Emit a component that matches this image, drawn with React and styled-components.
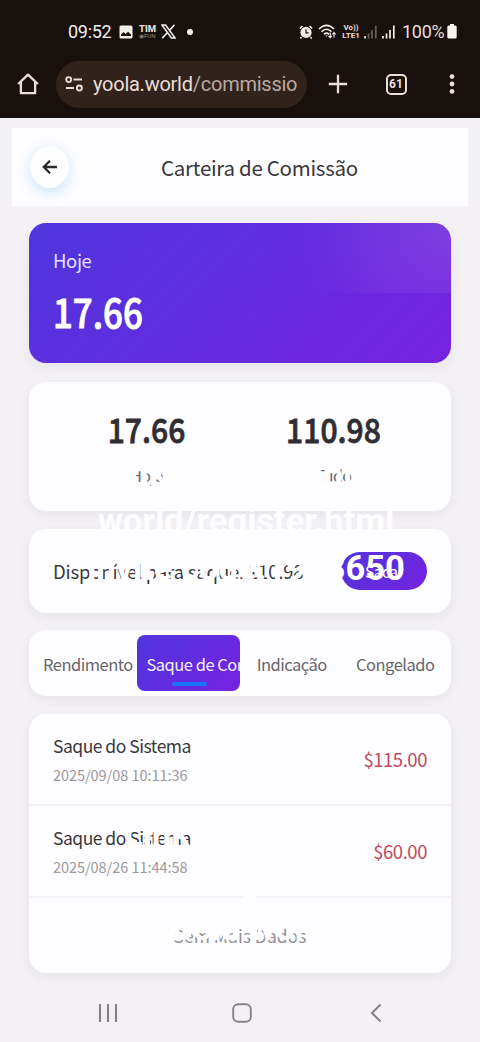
import React from "react";
import styled, { createGlobalStyle } from "styled-components";

const GlobalStyle = createGlobalStyle`
  * {
    box-sizing: border-box;
  }
  body {
    margin: 0;
    background: #f3f1f4;
  }
`;

const records = [
  { title: "Saque do Sistema", date: "2025/09/08 10:11:36", amount: "$115.00" },
  { title: "Saque do Sistema", date: "2025/08/26 11:44:58", amount: "$60.00" },
];

const StatusIcons = () => (
  <>
    <StatusIcon width="14" height="14" viewBox="0 0 14 14" $left={7}>
      <rect x="0.5" y="0.5" width="13" height="13" rx="1.5" fill="#f3eeea" />
      <path d="M2 11V9.5L4.5 7L6.5 9L9 6.8L12 9.5V11Z" fill="#18100c" />
    </StatusIcon>
    <Carrier>
      TIM
      <small>◉FUN</small>
    </Carrier>
    <StatusIcon width="15" height="15" viewBox="0 0 15 15" $left={5}>
      <path d="M1 1H4.6L14 14H10.4Z" fill="none" stroke="#f3eeea" strokeWidth="1.5" />
      <path d="M13.5 0.8L8.5 6.4M6.4 8.6L1.2 14.3" stroke="#f3eeea" strokeWidth="1.6" />
    </StatusIcon>
    <Dot />
  </>
);

const Signal = ({ dim }) => (
  <svg width="13" height="14" viewBox="0 0 13 14">
    <path d="M1 11V13.5" stroke="#f3eeea" strokeWidth="1.7" />
    <path
      d="M4.5 8.5V13.5M8 5V13.5M11.8 0.5V13.5"
      stroke={dim ? "#665e59" : "#f3eeea"}
      strokeWidth="1.7"
    />
  </svg>
);

const App = () => {
  return (
    <Screen>
      <GlobalStyle />
      <Chrome>
        <StatusBar>
          <Clock>09:52</Clock>
          <StatusIcons />
          <StatusRight>
            <svg width="14" height="14" viewBox="0 0 14 14">
              <circle cx="7" cy="7.4" r="5.6" fill="#f3eeea" />
              <path d="M0.8 3.5L3.5 1M13.2 3.5L10.5 1M2.5 12L1.3 13.5M11.5 12L12.7 13.5" stroke="#f3eeea" strokeWidth="1.6" />
              <path d="M7 4.2V7.8H9.6" stroke="#18100c" strokeWidth="1.2" fill="none" />
            </svg>
            <svg width="19" height="15" viewBox="0 0 19 15">
              <path d="M1 5Q8.5 -2.4 16 5M3.5 7.8Q8.5 2.8 13.5 7.8M6 10.3Q8.5 8 11 10.3" fill="none" stroke="#f3eeea" strokeWidth="1.6" />
              <path d="M7.2 11.4L8.5 12.8L9.8 11.4Z" fill="#f3eeea" />
              <path d="M12.2 8.5V13.5M10.6 12L12.2 13.7L13.8 12M16 13.5V8.7M14.4 10.3L16 8.5L17.6 10.3" fill="none" stroke="#f3eeea" strokeWidth="1.1" />
            </svg>
            <Lte>
              <span>Vo))</span>
              <span>LTE1</span>
            </Lte>
            <Signal dim />
            <Signal />
            <Percent>100%</Percent>
            <svg width="10" height="15" viewBox="0 0 10 15">
              <path d="M3 0H7V1.5H8.2Q9.7 1.5 9.7 3V13Q9.7 14.6 8.2 14.6H1.8Q0.3 14.6 0.3 13V3Q0.3 1.5 1.8 1.5H3Z" fill="#f8f4f0" />
            </svg>
          </StatusRight>
        </StatusBar>
        <AddressBar>
          <svg width="22" height="24" viewBox="0 0 22 24">
            <path d="M1.2 12L11 2.6L20.8 12M3.9 10V21.2H18.1V10" fill="none" stroke="#eadfd8" strokeWidth="2.3" strokeLinejoin="round" />
          </svg>
          <UrlPill>
            <svg width="19" height="16" viewBox="0 0 19 16">
              <circle cx="3.7" cy="3.6" r="2.5" fill="none" stroke="#eadfd8" strokeWidth="1.9" />
              <path d="M8.5 3.6H17M1 12H9" stroke="#eadfd8" strokeWidth="2" />
              <circle cx="14.4" cy="12" r="2.5" fill="none" stroke="#eadfd8" strokeWidth="1.9" />
            </svg>
            <Url>
              yoola.world<span>/commissio</span>
            </Url>
          </UrlPill>
          <BarIcons>
            <svg width="20" height="20" viewBox="0 0 20 20">
              <path d="M10 0.8V19.2M0.8 10H19.2" stroke="#eadfd8" strokeWidth="2.3" />
            </svg>
            <TabCount>61</TabCount>
            <svg width="6" height="20" viewBox="0 0 6 20">
              <circle cx="3" cy="2.6" r="2.4" fill="#eadfd8" />
              <circle cx="3" cy="10" r="2.4" fill="#eadfd8" />
              <circle cx="3" cy="17.4" r="2.4" fill="#eadfd8" />
            </svg>
          </BarIcons>
        </AddressBar>
      </Chrome>

      <PageHeader>
        <BackButton>
          <svg width="16" height="16" viewBox="0 0 16 16">
            <path d="M15 8H2M8 1.8L1.8 8L8 14.2" fill="none" stroke="#28282d" strokeWidth="2.3" />
          </svg>
        </BackButton>
        <PageTitle>Carteira de Comissão</PageTitle>
      </PageHeader>

      <Content>
        <BalanceCard>
          <BalanceLabel>Hoje</BalanceLabel>
          <BalanceValue>17.66</BalanceValue>
        </BalanceCard>

        <StatsCard>
          <Stat>
            <StatValue>17.66</StatValue>
            <StatLabel>Hoje</StatLabel>
          </Stat>
          <Stat>
            <StatValue>110.98</StatValue>
            <StatLabel>Tudo</StatLabel>
          </Stat>
        </StatsCard>

        <WithdrawCard>
          <Available>Disponível para saque: 110.98</Available>
          <WithdrawButton>Sacar</WithdrawButton>
        </WithdrawCard>

        <Tabs>
          <Tab>Rendimento</Tab>
          <Tab $active>Saque de Comissão</Tab>
          <Tab>Indicação</Tab>
          <Tab>Congelado</Tab>
        </Tabs>

        <List>
          {records.map((record) => (
            <Row key={record.date}>
              <div>
                <RowTitle>{record.title}</RowTitle>
                <RowDate>{record.date}</RowDate>
              </div>
              <Amount>{record.amount}</Amount>
            </Row>
          ))}
          <Empty>Sem Mais Dados</Empty>
        </List>
      </Content>

      <NavBar>
        <svg width="20" height="20" viewBox="0 0 20 20">
          <path d="M2 1V19M10 1V19M18 1V19" stroke="#858287" strokeWidth="2.1" />
        </svg>
        <HomeKey width="20" height="20" viewBox="0 0 20 20">
          <rect x="1.2" y="1.2" width="17.6" height="17.6" rx="5" fill="none" stroke="#858287" strokeWidth="1.9" />
        </HomeKey>
        <svg width="12" height="20" viewBox="0 0 12 20">
          <path d="M10.5 1.5L2 10L10.5 18.5" fill="none" stroke="#858287" strokeWidth="2" />
        </svg>
      </NavBar>

      {/* floating white captions over the page */}
      <Caption $top={455}>
        <span>link https://yoola.</span>
        <span>world/register.html</span>
        <span>invite code:1983650</span>
      </Caption>
      <Caption $top={815}>
        <span>Link para entrar</span>
        <span>siga</span>
        <span>yoola.world</span>
      </Caption>
    </Screen>
  );
};

export default App;

const cjk = `"Noto Sans CJK SC", "Noto Sans", sans-serif`;

const Screen = styled.div`
  position: relative;
  width: 480px;
  height: 1042px;
  overflow: hidden;
  display: flex;
  flex-direction: column;
  background: #f3f1f4;
  color: #39373c;
  font-family: ${cjk};
`;

const Chrome = styled.header`
  height: 118px;
  flex: none;
  background: #18100c;
  color: #eadfd8;
  font-family: Roboto, sans-serif;
`;

const StatusBar = styled.div`
  height: 56px;
  padding: 7px 23px 0 68px;
  display: flex;
  align-items: center;
`;

const Clock = styled.span`
  width: 44px;
  font-size: 18px;
  letter-spacing: -0.3px;
  color: #f3eeea;
`;

const StatusIcon = styled.svg`
  margin-left: ${({ $left }) => $left}px;
`;

const Carrier = styled.span`
  width: 17px;
  margin-left: 6px;
  font-size: 9.5px;
  line-height: 8px;
  font-weight: 800;
  small {
    display: block;
    font-size: 6px;
    line-height: 6px;
    font-weight: 400;
    color: #8b827d;
  }
`;

const Dot = styled.i`
  width: 6px;
  height: 6px;
  margin-left: 11px;
  border-radius: 50%;
  background: #f3eeea;
`;

const StatusRight = styled.div`
  margin-left: auto;
  display: flex;
  align-items: center;
  gap: 5px;
`;

const Lte = styled.span`
  width: 18px;
  margin-right: -1px;
  display: flex;
  flex-direction: column;
  align-items: center;
  font-size: 8px;
  line-height: 8px;
  font-weight: 700;
`;

const Percent = styled.span`
  width: 41px;
  margin: 0 -1px 0 2px;
  font-size: 18px;
  letter-spacing: -0.3px;
`;

const AddressBar = styled.div`
  height: 56px;
  padding: 0 25px 0 17px;
  display: flex;
  align-items: center;
`;

const UrlPill = styled.div`
  width: 251px;
  height: 47px;
  margin-left: 17px;
  padding-left: 9px;
  border-radius: 24px;
  background: #31231b;
  display: flex;
  align-items: center;
`;

const Url = styled.span`
  margin-left: 9px;
  font-size: 20px;
  letter-spacing: -0.25px;
  span {
    color: #b9aaa1;
  }
`;

const BarIcons = styled.div`
  flex: 1;
  margin-left: 21px;
  display: flex;
  align-items: center;
  justify-content: space-between;
`;

const TabCount = styled.span`
  width: 21px;
  height: 21px;
  margin-right: 5px;
  border: 2px solid #eadfd8;
  border-radius: 5px;
  font-size: 12px;
  line-height: 17px;
  font-weight: 700;
  text-align: center;
`;

const PageHeader = styled.div`
  height: 78px;
  margin: 10px 12px 17px;
  padding-left: 18px;
  flex: none;
  display: flex;
  align-items: center;
  background: #fefdff;
`;

const BackButton = styled.div`
  width: 39px;
  height: 42px;
  border-radius: 50%;
  background: #fefeff;
  box-shadow: 0 4px 14px rgba(70, 170, 225, 0.3);
  display: flex;
  align-items: center;
  justify-content: center;
`;

const PageTitle = styled.h1`
  margin: 0 0 0 92px;
  font-size: 20.5px;
  line-height: 30px;
  font-weight: 400;
  letter-spacing: -0.28px;
  white-space: nowrap;
`;

const Content = styled.main`
  height: 750px;
  padding: 0 29px;
  flex: none;
`;

const Card = styled.section`
  border-radius: 17px;
  background: #fefdff;
  box-shadow: 0 4px 12px rgba(40, 30, 60, 0.06);
`;

const BalanceCard = styled(Card)`
  height: 140px;
  padding: 22px 24px;
  background:
    radial-gradient(ellipse 150px 130px at 100% 15%, rgba(255, 255, 255, 0.11), rgba(255, 255, 255, 0)) top / 100% 70px no-repeat,
    linear-gradient(135deg, #4f36dc, #7622df);
  color: #fff;
`;

const BalanceLabel = styled.div`
  font-size: 18.5px;
  line-height: 30px;
  letter-spacing: -0.4px;
  opacity: 0.86;
`;

const BalanceValue = styled.div`
  margin-top: 11px;
  font-size: 40px;
  line-height: 50px;
  font-weight: 500;
  -webkit-text-stroke: 0.9px currentColor;
  transform: scaleX(0.87);
  transform-origin: left;
`;

const StatsCard = styled(Card)`
  height: 129px;
  margin-top: 19px;
  padding: 25px 24px;
  display: flex;
`;

const Stat = styled.div`
  flex: 1;
  text-align: center;
`;

const StatValue = styled.div`
  font-size: 34px;
  line-height: 44px;
  font-weight: 500;
  -webkit-text-stroke: 0.8px currentColor;
  transform: scaleX(0.885);
  color: #302e33;
`;

const StatLabel = styled.div`
  margin-top: 11px;
  font-size: 16px;
  line-height: 26px;
  letter-spacing: -0.5px;
  color: #68666b;
`;

const WithdrawCard = styled(Card)`
  height: 84px;
  margin-top: 18px;
  padding: 0 24px;
  display: flex;
  align-items: center;
  justify-content: space-between;
`;

const Available = styled.span`
  font-size: 18.5px;
  letter-spacing: -0.17px;
  white-space: nowrap;
`;

const WithdrawButton = styled.button`
  width: 86px;
  height: 38px;
  flex: none;
  padding: 0;
  border: 0;
  border-radius: 19px;
  background: linear-gradient(135deg, #4f36dc, #7622df);
  color: #fff;
  font-family: ${cjk};
  font-size: 15.5px;
  letter-spacing: -0.5px;
`;

const Tabs = styled(Card)`
  height: 66px;
  margin-top: 17px;
  padding: 5px 4px;
  display: flex;
`;

const Tab = styled.div`
  position: relative;
  width: 103.5px;
  height: 56px;
  flex: none;
  border-radius: 8px;
  padding: 0 10px;
  overflow: hidden;
  background: ${({ $active }) => ($active ? "linear-gradient(135deg, #4f36dc, #7622df)" : "none")};
  color: ${({ $active }) => ($active ? "#f4efff" : "#68666b")};
  font-size: 16.5px;
  line-height: 58px;
  letter-spacing: -0.5px;
  text-align: ${({ $active }) => ($active ? "left" : "center")};
  white-space: nowrap;

  &::after {
    content: "";
    display: ${({ $active }) => ($active ? "block" : "none")};
    position: absolute;
    left: 35px;
    bottom: 5px;
    width: 35px;
    height: 4px;
    border-radius: 2px;
    background: #1876f2;
  }
`;

const List = styled(Card)`
  height: 259px;
  margin-top: 18px;
`;

const Row = styled.div`
  height: 92px;
  padding: 0 24px;
  display: flex;
  align-items: center;
  justify-content: space-between;
  border-bottom: 2px solid #f3f1f5;
`;

const RowTitle = styled.div`
  font-size: 17.5px;
  line-height: 30px;
  letter-spacing: -0.5px;
`;

const RowDate = styled.div`
  margin-top: 1px;
  font-size: 14.5px;
  line-height: 26px;
  letter-spacing: -0.05px;
  color: #9b999e;
`;

const Amount = styled.div`
  font-size: 18.5px;
  letter-spacing: -0.45px;
  color: #c04a5c;
`;

const Empty = styled.div`
  height: 76px;
  font-size: 17.5px;
  line-height: 76px;
  text-align: center;
  color: #929095;
`;

const NavBar = styled.footer`
  height: 69px;
  padding: 11px 98px 0;
  display: flex;
  align-items: center;
  justify-content: space-between;
`;

const HomeKey = styled.svg`
  margin-right: 5px;
`;

const Caption = styled.div`
  position: absolute;
  top: ${({ $top }) => $top}px;
  left: 46px;
  width: 400px;
  display: flex;
  flex-direction: column;
  align-items: center;
  gap: 9px;
  color: #fefdff;
  font-family: Roboto, sans-serif;
  font-size: 34.5px;
  line-height: 38px;
  font-weight: 700;
  white-space: pre;
  pointer-events: none;
`;
